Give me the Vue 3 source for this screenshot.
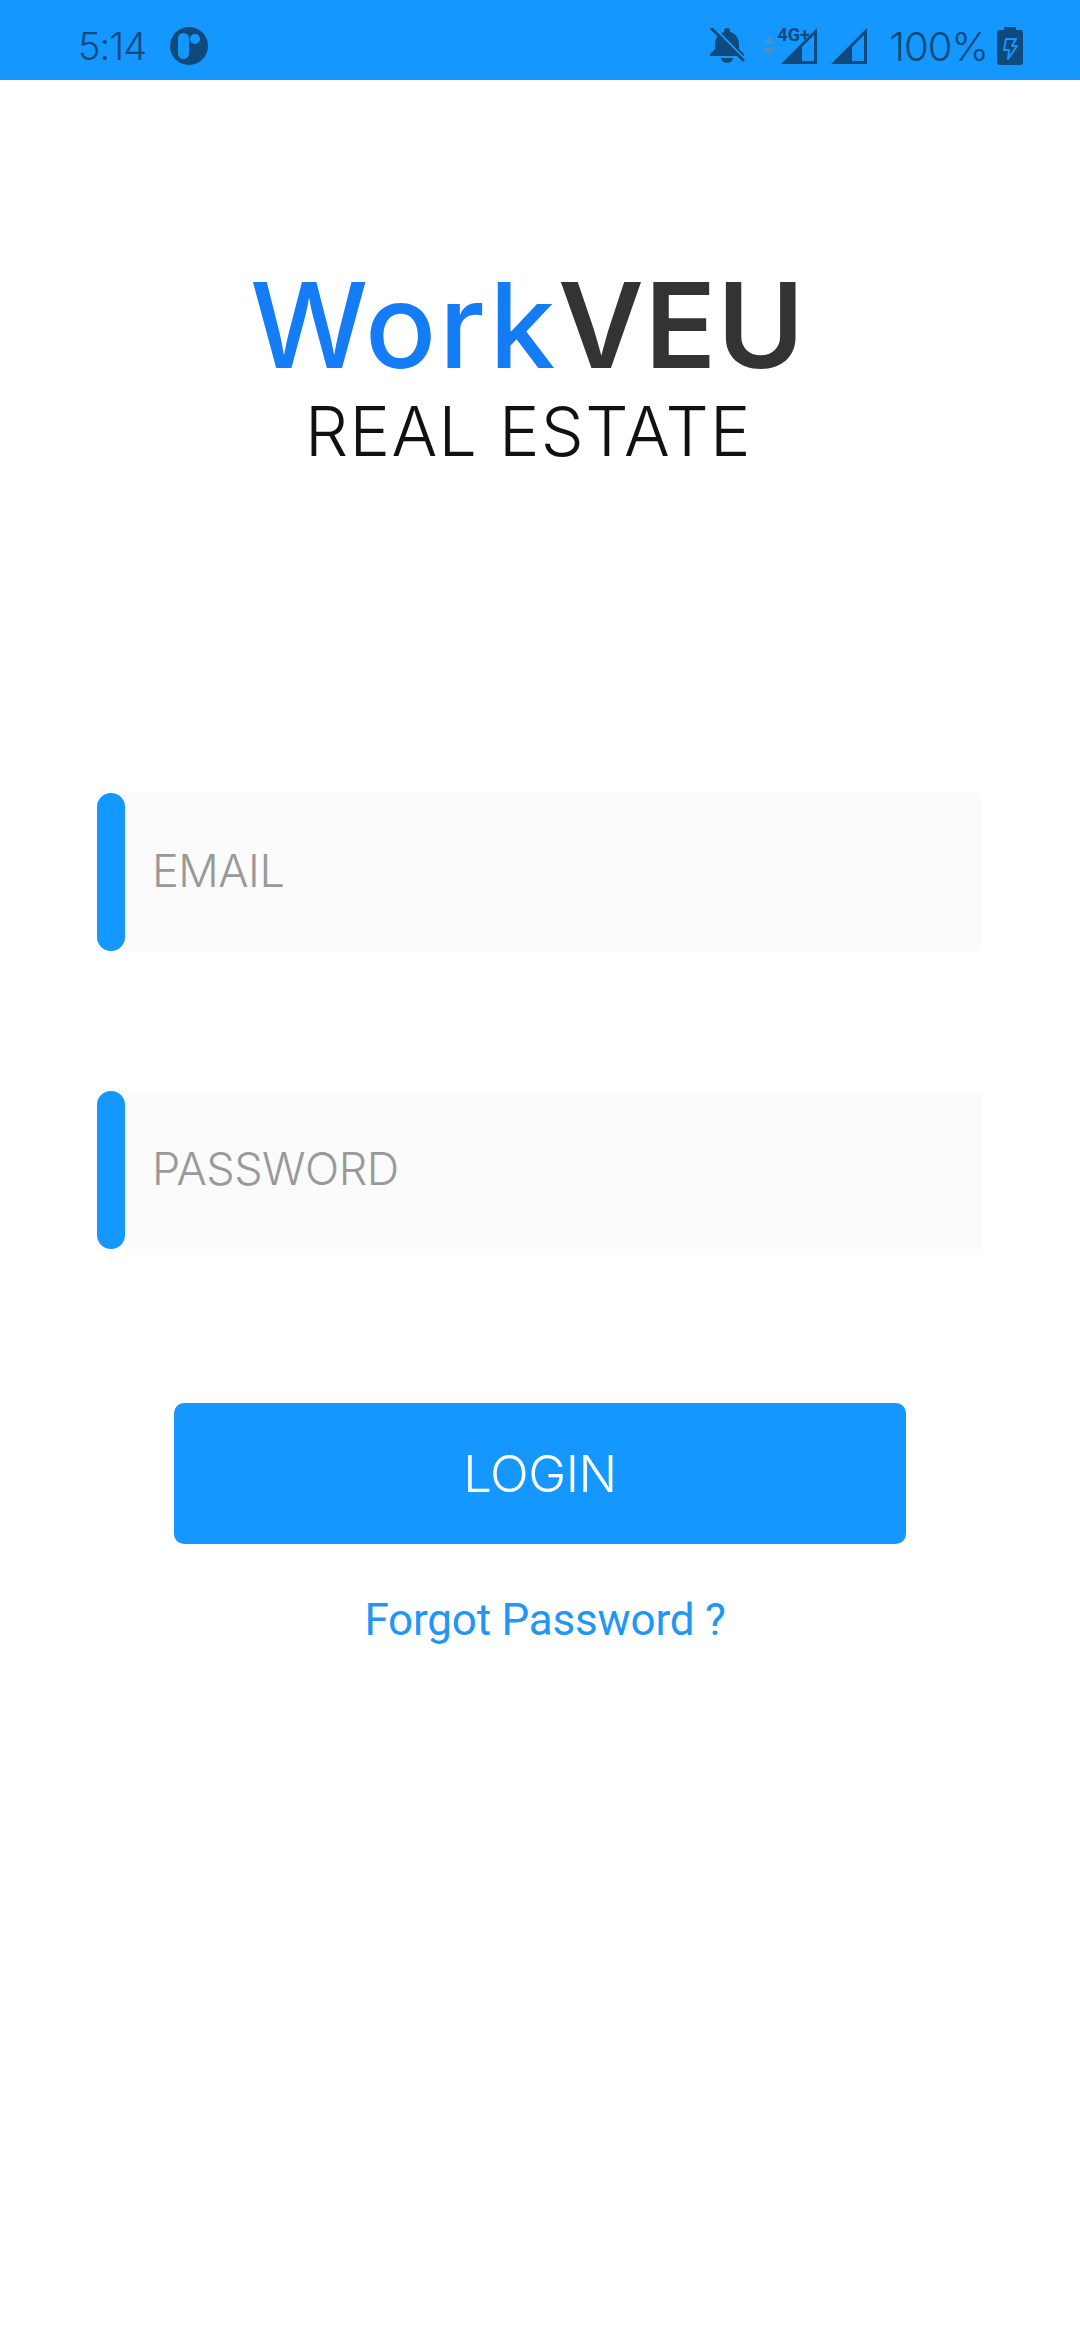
<template>
  <div class="screen">
    <div class="status-bar">
      <div class="status-left">
        <span class="time">5:14</span>
        <svg class="app-icon" width="38" height="38" viewBox="0 0 38 38">
          <circle cx="19" cy="19" r="19" fill="#0f4a7d" />
          <rect x="8" y="6" width="11" height="26" rx="5.5" fill="#1497ff" />
          <circle cx="25" cy="12" r="5" fill="#1497ff" />
        </svg>
      </div>
      <div class="status-right">
        <svg class="bell" width="36" height="36" viewBox="0 0 36 36">
          <path d="M18 0a3 3 0 0 1 3 3v1c6 1.500 9 6.500 9 12v5l5 5v2H1v-2l5-5v-5c0-5.500 3-10.500 9-12V3a3 3 0 0 1 3-3z" fill="#0f4a7d" />
          <path d="M12 30h12a6 5 0 0 1-12 0z" fill="#0f4a7d" />
          <path d="M4-1l32 33" stroke="#1497ff" stroke-width="3" />
          <path d="M2 0l33 33" stroke="#0f4a7d" stroke-width="3" />
        </svg>
        <svg class="arrows" width="13" height="18" viewBox="0 0 13 18">
          <path d="M6.500 0l6 7H.5z" fill="#4f8fc4" />
          <path d="M6.500 18l6-7H.5z" fill="#4f8fc4" />
        </svg>
        <div class="net">
          <svg width="38" height="38" viewBox="0 0 38 38">
            <path fill-rule="evenodd" d="M37 1v36H1zM34 8L22 20v14h12z" fill="#0f4a7d" />
          </svg>
          <span class="net-label">4G+</span>
        </div>
        <svg class="signal" width="38" height="38" viewBox="0 0 38 38">
          <path fill-rule="evenodd" d="M37 1v36H1zM34 8L22 20v14h12z" fill="#0f4a7d" />
        </svg>
        <span class="battery-text">100%</span>
        <svg width="26" height="38" viewBox="0 0 26 38">
          <path d="M7 0h12v3h4a3 3 0 0 1 3 3v29a3 3 0 0 1-3 3H3a3 3 0 0 1-3-3V6a3 3 0 0 1 3-3h4z" fill="#0f4a7d" />
          <path d="M9 12h10l-4 7h5l-9 13 1-9H7z" fill="#0f4a7d" stroke="#1497ff" stroke-width="2" stroke-linejoin="round" />
        </svg>
      </div>
    </div>

    <div class="logo">
      <div class="logo-name"><span class="work">Work</span><span class="veu">VEU</span></div>
      <div class="logo-sub">REAL ESTATE</div>
    </div>

    <div class="form">
      <div v-for="field in fields" :key="field" class="field">
        <div class="field-bar"></div>
        <div class="field-label">{{ field }}</div>
      </div>
    </div>

    <div class="login-btn">LOGIN</div>
    <div class="forgot">Forgot Password ?</div>
  </div>
</template>

<script setup>
const fields = ['EMAIL', 'PASSWORD']
</script>

<style>
body {
  margin: 0;
  background: #fff;
}
</style>

<style scoped>
.screen {
  width: 1080px;
  height: 2340px;
  background: #fff;
  overflow: hidden;
  font-family: Inter, "Liberation Sans", sans-serif;
}

.status-bar {
  height: 80px;
  background: #1497ff;
  display: flex;
  justify-content: space-between;
  align-items: center;
  padding: 12px 57px 0 78px;
  box-sizing: border-box;
  color: #0f4a7d;
}

.status-left,
.status-right {
  display: flex;
  align-items: center;
}

.time {
  font-size: 38px;
  font-weight: 300;
  letter-spacing: -1px;
  margin-right: 24px;
}

.bell {
  margin-right: 18px;
}

.arrows {
  margin-right: 4px;
}

.net {
  position: relative;
  width: 38px;
  height: 38px;
  margin-right: 12px;
}

.net-label {
  position: absolute;
  left: -3px;
  top: -2px;
  font-family: Roboto, sans-serif;
  font-size: 18px;
  font-weight: 700;
  line-height: 20px;
}

.battery-text {
  font-size: 40px;
  font-weight: 300;
  letter-spacing: -1px;
  margin: 0 9px 0 21px;
}

.logo {
  margin-top: 180px;
  margin-left: 250px;
  width: 550px;
  text-align: center;
}

.logo-name {
  font-size: 118px;
  line-height: 130px;
  white-space: nowrap;
}

.work {
  color: #147df5;
  font-weight: 500;
  letter-spacing: 2.7px;
}

.veu {
  color: #333;
  font-weight: 600;
  letter-spacing: 1px;
}

.logo-sub {
  margin-top: 1px;
  padding-left: 7px;
  font-size: 68px;
  font-weight: 300;
  line-height: 80px;
  color: #111;
  letter-spacing: 1.4px;
  white-space: nowrap;
}

.form {
  margin: 322px 0 0 97px;
  width: 885px;
  display: flex;
  flex-direction: column;
  gap: 140px;
}

.field {
  height: 158px;
  background: #fbfbfb;
  display: flex;
  align-items: center;
}

.field-bar {
  width: 28px;
  height: 158px;
  border-radius: 14px;
  background: #1497ff;
}

.field-label {
  margin-left: 27px;
  padding-bottom: 3px;
  font-size: 45px;
  font-weight: 300;
  letter-spacing: -0.5px;
  color: #999;
}

.login-btn {
  margin: 154px 0 0 174px;
  width: 732px;
  height: 141px;
  border-radius: 10px;
  background: #1497ff;
  color: #fff;
  font-size: 51px;
  font-weight: 300;
  letter-spacing: -0.5px;
  display: flex;
  align-items: center;
  justify-content: center;
}

.forgot {
  margin-top: 48px;
  margin-left: 179px;
  width: 732px;
  text-align: center;
  font-family: Roboto, sans-serif;
  font-size: 44px;
  line-height: 56px;
  letter-spacing: -0.2px;
  color: #2196f3;
}
</style>
